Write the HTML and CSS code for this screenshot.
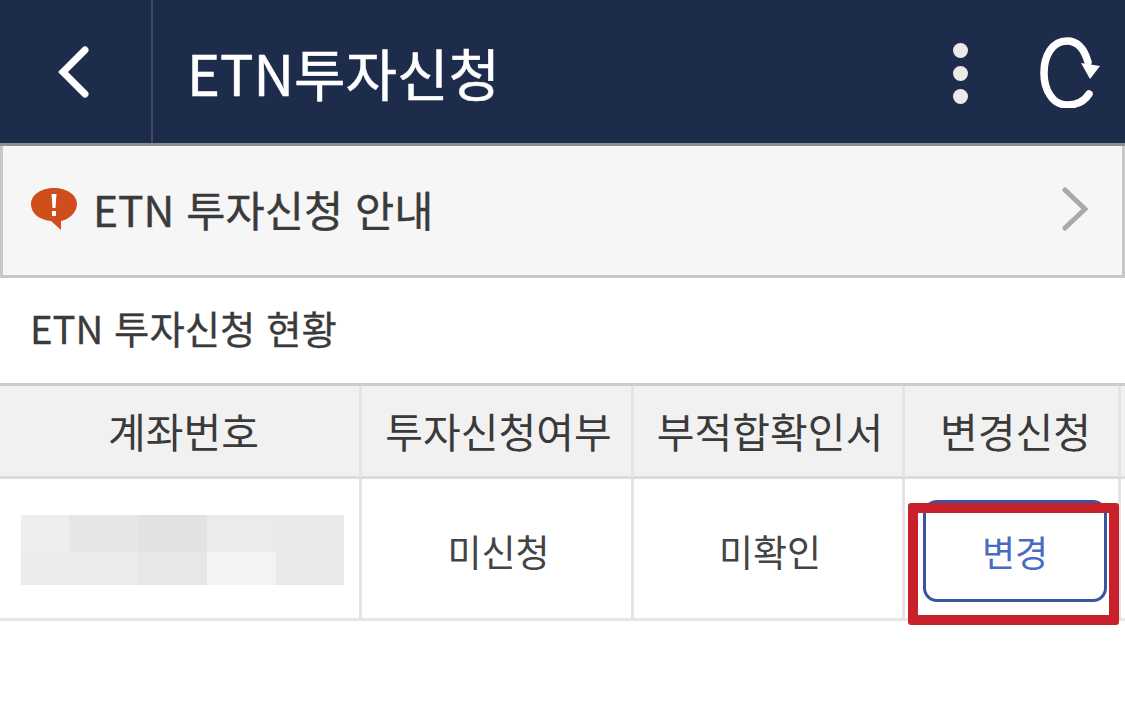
FILE: index.html
```html
<!DOCTYPE html>
<html lang="ko">
  <head>
    <meta charset="UTF-8" />
    <meta name="viewport" content="width=device-width, initial-scale=1.0" />
    <title>ETN투자신청</title>
    <link rel="stylesheet" href="styles.css">
  </head>
  <body>
    <header class="top-bar">
      <div class="back-cell">
        <svg class="back-icon" width="34" height="54" viewBox="0 0 34 54">
          <path d="M28 5 L6 27 L28 49" fill="none" stroke="#fff" stroke-width="7" stroke-linecap="round" stroke-linejoin="miter" />
        </svg>
      </div>
      <h1 class="page-title">ETN투자신청</h1>
      <div class="top-actions">
        <div class="more-dots">
          <span></span>
          <span></span>
          <span></span>
        </div>
        <svg class="reload-icon" width="60" height="72" viewBox="0 0 60 72">
          <path d="M49 58 C44 66 35 69 27 69 C12 69 4 53 4 37 C4 20 12 5 27 5 C37 5 44 12 48 26" fill="none" stroke="#fff" stroke-width="7.5" stroke-linecap="round" />
          <path d="M41 27 L60 30 L50 43 Z" fill="#fff" />
        </svg>
      </div>
    </header>

    <div class="notice-bar">
      <svg class="notice-icon" width="48" height="44" viewBox="0 0 48 44">
        <path d="M24 1 C37 1 47 8 47 17 C47 26 38 33 31 34 L31 43 L21 34 C10 33 1 27 1 17 C1 8 11 1 24 1 Z" fill="#d04e1c" />
        <path d="M21.5 7 H26.5 L25.5 21 H22.5 Z" fill="#fff" />
        <rect x="22" y="24" width="4" height="5" fill="#fff" />
      </svg>
      <span class="notice-text">ETN 투자신청 안내</span>
      <svg class="notice-arrow" width="26" height="44" viewBox="0 0 26 44">
        <path d="M3 3 L23 22 L3 41" fill="none" stroke="#a9a9a9" stroke-width="5" stroke-linecap="round" />
      </svg>
    </div>

    <h2 class="section-title">ETN 투자신청 현황</h2>

    <div class="status-table">
      <div class="cell head shifted">계좌번호</div>
      <div class="cell head">투자신청여부</div>
      <div class="cell head">부적합확인서</div>
      <div class="cell head shifted">변경신청</div>
      <div class="cell head edge"></div>

      <div class="cell">
        <div class="masked">
          <i class="m1"></i><i class="m2"></i><i class="m3"></i><i class="m4"></i><i class="m5"></i>
          <i class="m6"></i><i class="m7"></i><i class="m8"></i><i class="m9"></i><i class="m10"></i>
        </div>
      </div>
      <div class="cell value">미신청</div>
      <div class="cell value">미확인</div>
      <div class="cell">
        <button class="change-btn" type="button">변경</button>
        <div class="red-mark"></div>
      </div>
      <div class="cell edge"></div>
    </div>
  </body>
</html>
```

FILE: styles.css
```css
* {
  box-sizing: border-box;
  font-family: "Noto Sans CJK KR", "Noto Sans", sans-serif;
}

body {
  margin: 0;
  height: 728px;
  overflow: hidden;
  background-color: #fff;
  color: #3a3a3a;
}

.top-bar {
  display: flex;
  align-items: center;
  height: 146px;
  background-color: #1e2c4c;
  border-bottom: 3px solid #8b8f98;
}

.back-cell {
  display: flex;
  align-items: center;
  width: 153px;
  height: 100%;
  padding-left: 57px;
  border-right: 2px solid #3d4a68;
}

.page-title {
  flex: 1;
  margin: 0 0 0 34px;
  color: #fff;
  font-size: 56px;
  font-weight: 400;
  line-height: 1;
  -webkit-text-stroke: 0.5px #fff;
}

.top-actions {
  display: flex;
  align-items: center;
  gap: 72px;
  padding-right: 25px;
}

.more-dots {
  display: flex;
  flex-direction: column;
  gap: 8px;
  margin-top: 4px;
}

.more-dots span {
  width: 15px;
  height: 15px;
  border-radius: 50%;
  background-color: #eceae8;
}

.notice-bar {
  display: flex;
  align-items: center;
  height: 132px;
  padding: 0 34px 0 27px;
  background-color: #f6f6f6;
  border: 3px solid #c8c8c8;
  border-top: 0;
}

.notice-icon,
.notice-arrow {
  margin-bottom: 4px;
}

.notice-text {
  flex: 1;
  margin: 0 0 4px 15px;
  font-size: 42.6px;
  font-weight: 400;
  -webkit-text-stroke: 0.4px #3a3a3a;
}

.section-title {
  margin: 0;
  height: 105px;
  padding: 22px 0 0 30px;
  font-size: 38.4px;
  font-weight: 400;
  line-height: 54px;
  -webkit-text-stroke: 0.3px #3a3a3a;
}

.status-table {
  display: grid;
  grid-template-columns: 362px 272px 271px 216px 1fr;
  grid-template-rows: 93px 142px;
  border-top: 3px solid #cdcdcd;
}

.cell {
  position: relative;
  display: flex;
  align-items: center;
  justify-content: center;
  padding-left: 4px;
  border-right: 3px solid #e4e4e4;
  border-bottom: 3px solid #e6e6e6;
  font-size: 37px;
}

.head {
  padding-bottom: 3px;
  background-color: #f1f1f1;
  border-bottom-color: #dcdcdc;
  font-size: 41px;
}

.shifted {
  padding-left: 8px;
}

.edge {
  border-right: 0;
}

.value {
  padding-top: 4px;
  color: #444;
}

.masked {
  display: grid;
  grid-template-columns: 48px 70px 68px 69px 68px;
  grid-template-rows: 37px 33px;
  margin: 3px 0 0 1px;
}

.masked i {
  display: block;
}

.m1 { background-color: #eeeeee; }
.m2 { background-color: #e6e6e6; }
.m3 { background-color: #e2e2e2; }
.m4 { background-color: #ebebeb; }
.m5 { background-color: #eaeaea; }
.m6 { background-color: #ececec; }
.m7 { background-color: #ebebeb; }
.m8 { background-color: #e7e7e7; }
.m9 { background-color: #f3f3f3; }
.m10 { background-color: #e9e9e9; }

.change-btn {
  width: 184px;
  height: 102px;
  margin: 5px 0 0 3px;
  background-color: #fff;
  border: 3px solid #3a55a0;
  border-radius: 14px;
  color: #4a6cc0;
  font-size: 36px;
  font-weight: 400;
}

.red-mark {
  position: absolute;
  left: 3px;
  top: 24px;
  width: 211px;
  height: 122px;
  border: 10px solid #c9212b;
  border-radius: 3px;
}
```
